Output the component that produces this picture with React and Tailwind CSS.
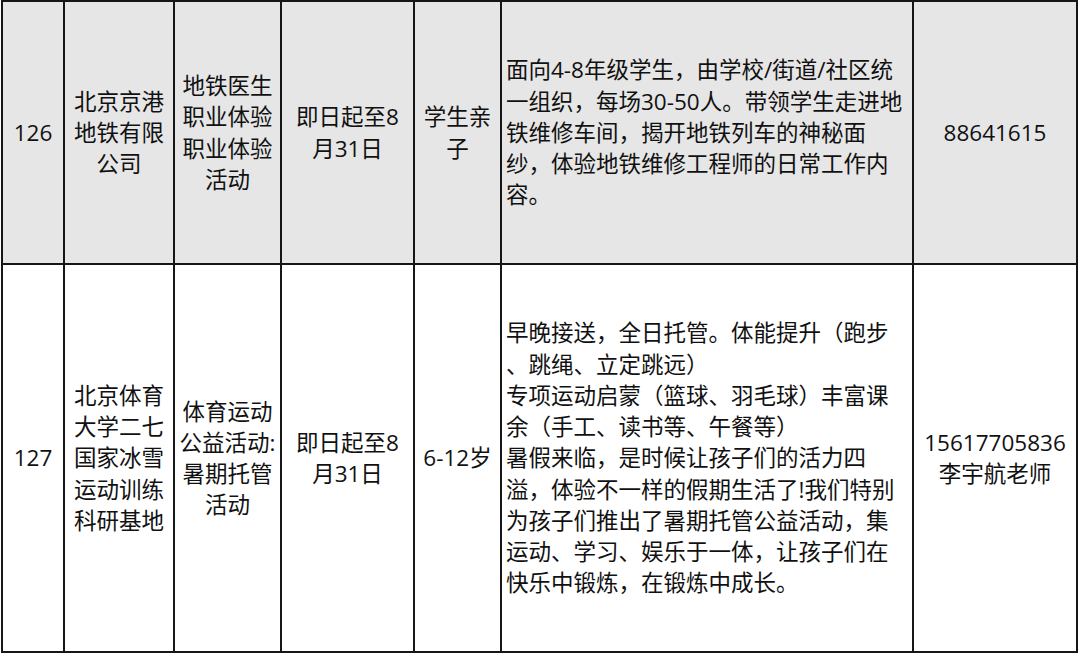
import React from "react";

const rows = [
  {
    bg: "bg-[#e6e6e6]",
    cells: [
      ["126"],
      ["北京京港", "地铁有限", "公司"],
      ["地铁医生", "职业体验", "职业体验", "活动"],
      ["即日起至8", "月31日"],
      ["学生亲", "子"],
      [
        "面向4-8年级学生，由学校/街道/社区统",
        "一组织，每场30-50人。带领学生走进地",
        "铁维修车间，揭开地铁列车的神秘面",
        "纱，体验地铁维修工程师的日常工作内",
        "容。",
      ],
      ["88641615"],
    ],
  },
  {
    bg: "bg-white",
    cells: [
      ["127"],
      ["北京体育", "大学二七", "国家冰雪", "运动训练", "科研基地"],
      ["体育运动", "公益活动:", "暑期托管", "活动"],
      ["即日起至8", "月31日"],
      ["6-12岁"],
      [
        "早晚接送，全日托管。体能提升（跑步",
        "、跳绳、立定跳远）",
        "专项运动启蒙（篮球、羽毛球）丰富课",
        "余（手工、读书等、午餐等）",
        "暑假来临，是时候让孩子们的活力四",
        "溢，体验不一样的假期生活了!我们特别",
        "为孩子们推出了暑期托管公益活动，集",
        "运动、学习、娱乐于一体，让孩子们在",
        "快乐中锻炼，在锻炼中成长。",
      ],
      ["15617705836", "李宇航老师"],
    ],
  },
];

export default function App() {
  return (
    <div className="bg-white min-h-screen w-[1080px] h-[655px] font-['Open_Sans','Noto_Sans_CJK_SC',sans-serif] text-[22.5px] leading-[31.25px] text-[#111]">
      <div className="ml-px w-fit grid grid-cols-[62px_110px_107px_133px_87px_412px_164px] grid-rows-[263px_388px] border-l-2 border-t-2 border-[#161616]">
        {rows.map((row, r) =>
          row.cells.map((lines, c) => (
            <div
              key={r + "-" + c}
              className={
                row.bg +
                " border-r-2 border-b-2 border-[#161616] flex flex-col justify-center " +
                (c === 5 ? "items-start text-left pl-[4px]" : "items-center text-center")
              }
            >
              {lines.map((t, i) => (
                <div key={i} className="whitespace-nowrap">
                  {t}
                </div>
              ))}
            </div>
          ))
        )}
      </div>
    </div>
  );
}
